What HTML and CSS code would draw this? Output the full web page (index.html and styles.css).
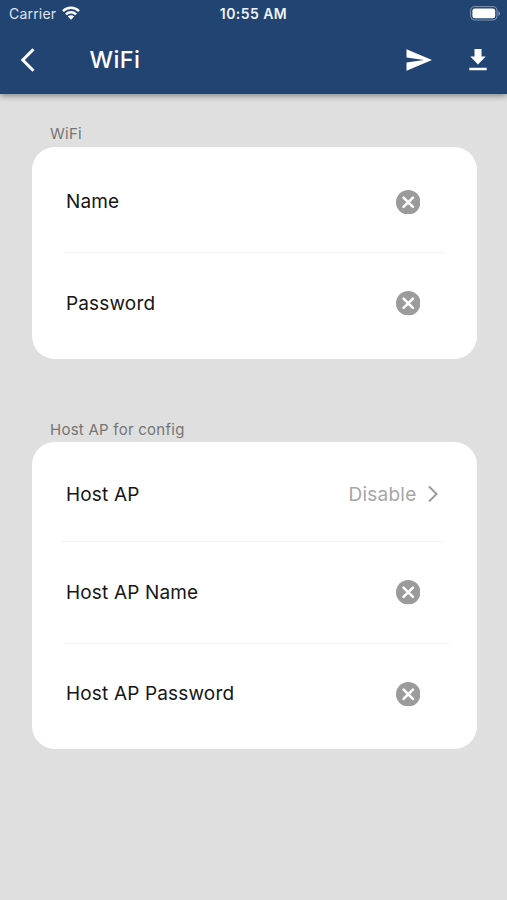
FILE: index.html
```html
<!DOCTYPE html>
<html lang="en">
<head>
<meta charset="utf-8">
<title>WiFi</title>
<link rel="stylesheet" href="styles.css">
</head>
<body>
<svg class="defs" width="0" height="0">
  <symbol id="clear" viewBox="0 0 24 24"><circle cx="12" cy="12" r="12" fill="#9b9b9b"/><path d="M7.4 7.4l9.200 9.200M16.600 7.400l-9.200 9.200" stroke="#fff" stroke-width="2.5" stroke-linecap="round"/></symbol>
</svg>
<header class="header">
  <div class="status">
    <div class="carrier"><span class="carrier-name">Carrier</span>
      <svg class="wifi" width="18" height="14" viewBox="0 0 18 14" fill="none" stroke="#fff" stroke-width="2.4"><path d="M1 5.1a11.4 11.4 0 0 1 16 0M3.9 8.4a7.2 7.2 0 0 1 10.2 0"/><path d="M9 13.8l-3.200-3.200a4.500 4.500 0 0 1 6.400 0z" fill="#fff" stroke="none"/></svg>
    </div>
    <span class="time">10:55 AM</span>
    <svg class="battery" width="31" height="15" viewBox="0 0 31 15"><rect x=".6" y=".6" width="26.4" height="13.4" rx="4" fill="none" stroke="#8295b2" stroke-width="1"/><rect x="2.4" y="2.4" width="22.8" height="9.8" rx="2.3" fill="#fff"/><path d="M28.3 5c2.2.7 2.2 4.1 0 4.8z" fill="#8295b2"/></svg>
  </div>
  <nav class="toolbar">
    <svg class="back" width="16" height="26" viewBox="0 0 16 26"><path d="M13.5 2.2L2.8 13l10.7 10.8" fill="none" stroke="#fff" stroke-width="3"/></svg>
    <h1 class="title">WiFi</h1>
    <svg class="send" width="26" height="22" viewBox="0 0 26 22"><path d="M.5.3L26 11 .5 21.700V13.400L18 11 .5 8.600z" fill="#fff"/></svg>
    <svg class="download" width="18" height="22" viewBox="0 0 18 22"><path d="M5.500 0h7v7.500h4.200L9 15.600 1.300 7.500h4.200zM.3 18.700h17.400v2.600H.3z" fill="#fff"/></svg>
  </nav>
</header>
<main class="content">
  <h2 class="section-title">WiFi</h2>
  <section class="card">
    <div class="row"><span class="label">Name</span><svg class="clear"><use href="#clear"/></svg></div>
    <hr class="divider">
    <div class="row"><span class="label">Password</span><svg class="clear"><use href="#clear"/></svg></div>
  </section>
  <h2 class="section-title">Host AP for config</h2>
  <section class="card">
    <div class="row row-select"><span class="label">Host AP</span><span class="value">Disable</span><svg class="chevron" width="12" height="18" viewBox="0 0 12 18"><path d="M2 1.500L9.600 9 2 16.500" fill="none" stroke="#999" stroke-width="1.900"/></svg></div>
    <hr class="divider divider-left">
    <div class="row"><span class="label">Host AP Name</span><svg class="clear"><use href="#clear"/></svg></div>
    <hr class="divider divider-right">
    <div class="row"><span class="label">Host AP Password</span><svg class="clear"><use href="#clear"/></svg></div>
  </section>
</main>
</body>
</html>
```
FILE: styles.css
```css
* { box-sizing: border-box; }
body {
  margin: 0;
  min-height: 900px;
  background: #dfdfdf;
  font-family: Inter, "Liberation Sans", sans-serif;
  color: #161616;
}
.defs { position: absolute; }
.header {
  height: 93.500px;
  background: #224472;
  color: #fff;
  box-shadow: 0 2px 6px rgba(0, 0, 0, .4);
}
.status {
  display: grid;
  grid-template-columns: 1fr auto 1fr;
  align-items: center;
  height: 27px;
  padding: 0 6px 0 9px;
}
.carrier { display: flex; align-items: center; gap: 6px; }
.carrier-name { font-size: 14px; letter-spacing: .2px; color: #dfe6f0; }
.wifi { margin-top: -1px; }
.time { margin-left: -3px; font-size: 14px; font-weight: 600; letter-spacing: .45px; color: #eef2f8; }
.battery { justify-self: end; }
.toolbar {
  display: flex;
  align-items: center;
  height: 65px;
  padding: 0 20px 0 20px;
}
.title {
  flex: 1;
  margin: 0 0 0 53.500px;
  font-size: 23.500px;
  font-weight: 450;
  line-height: 30px;
  letter-spacing: .4px;
}
.download { margin-left: 37px; }
.content { padding: 30.500px 30.500px 0 31.500px; }
.section-title {
  height: 22.500px;
  margin: 0;
  padding-left: 18.500px;
  font-size: 15px;
  font-weight: 400;
  line-height: 19px;
  letter-spacing: .25px;
  color: #757575;
}
.card {
  padding: 5px 0;
  border-radius: 23px;
  background: #fff;
}
.card + .section-title { margin-top: 61px; }
.row {
  display: flex;
  align-items: center;
  height: 100.500px;
  padding: 0 56.500px 0 34.500px;
}
.row-select { height: 94px; padding-right: 38px; }
.label { flex: 1; font-size: 19px; letter-spacing: .16px; }
.clear { width: 24.500px; height: 24.500px; }
.value { font-size: 19px; letter-spacing: .25px; color: #a6a6a6; }
.chevron { margin-left: 10px; }
.divider {
  height: 1px;
  margin: 0 32.500px;
  border: 0;
  background: #f2f2f2;
}
.divider-left { margin-left: 29px; }
.divider-right { margin-right: 28px; }
```
